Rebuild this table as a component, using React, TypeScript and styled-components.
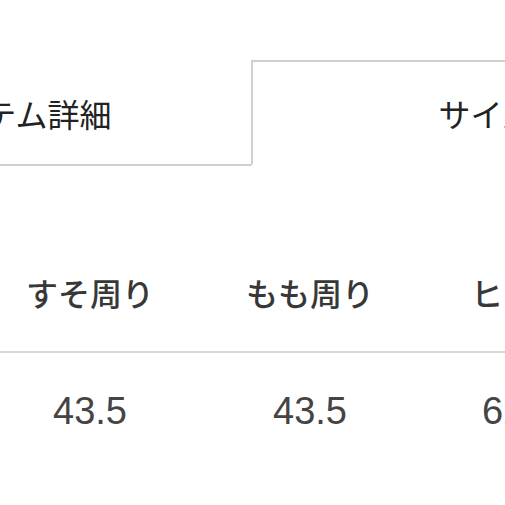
import styled, { createGlobalStyle } from "styled-components";

const GlobalStyle = createGlobalStyle`
  html, body {
    margin: 0;
    padding: 0;
    background: #fff;
    overflow: hidden;
  }
  body {
    font-family: "Noto Sans CJK JP", "Noto Sans", sans-serif;
  }
`;

const Page = styled.div`
  width: 505px;
  height: 505px;
  overflow: hidden;
  padding-top: 60px;
  box-sizing: border-box;
`;

const TabRow = styled.div`
  display: flex;
  margin-left: -219px;
  width: 940px;
`;

const Tab = styled.div<{ $active?: boolean }>`
  width: 470px;
  height: 106px;
  box-sizing: border-box;
  display: flex;
  align-items: center;
  justify-content: center;
  font-size: 32px;
  color: #222;
  border: 2px solid ${({ $active }) => ($active ? "#d0d0d0" : "transparent")};
  border-bottom: 2px solid ${({ $active }) => ($active ? "transparent" : "#d0d0d0")};
  ${({ $active }) => !$active && "border-right: none;"}
`;

const Table = styled.div`
  margin-top: 66px;
`;

const Row = styled.div<{ $divider?: boolean }>`
  display: flex;
  height: ${({ $divider }) => ($divider ? "119px" : "116px")};
  align-items: center;
  margin-left: -20px;
  width: 640px;
  border-bottom: ${({ $divider }) => ($divider ? "2px solid #d6d6d6" : "none")};
`;

const HeadCell = styled.div<{ $w: number }>`
  flex: none;
  width: ${({ $w }) => $w}px;
  text-align: center;
  font-size: 32px;
  font-weight: 500;
  color: #383838;
  white-space: nowrap;
`;

const ValueCell = styled.div<{ $w: number }>`
  flex: none;
  width: ${({ $w }) => $w}px;
  text-align: center;
  font-family: "Liberation Sans", Arial, sans-serif;
  font-size: 38px;
  color: #444;
  white-space: nowrap;
`;

const columns = [
  { label: "すそ周り", value: "43.5", w: 220 },
  { label: "もも周り", value: "43.5", w: 220 },
  { label: "ヒップ", value: "62.5", w: 198 },
];

export default function App() {
  return (
    <>
      <GlobalStyle />
      <Page>
        <TabRow>
          <Tab>アイテム詳細</Tab>
          <Tab $active>サイズ</Tab>
        </TabRow>
        <Table>
          <Row $divider>
            {columns.map((c) => (
              <HeadCell key={c.label} $w={c.w}>{c.label}</HeadCell>
            ))}
          </Row>
          <Row>
            {columns.map((c) => (
              <ValueCell key={c.label} $w={c.w}>{c.value}</ValueCell>
            ))}
          </Row>
        </Table>
      </Page>
    </>
  );
}
